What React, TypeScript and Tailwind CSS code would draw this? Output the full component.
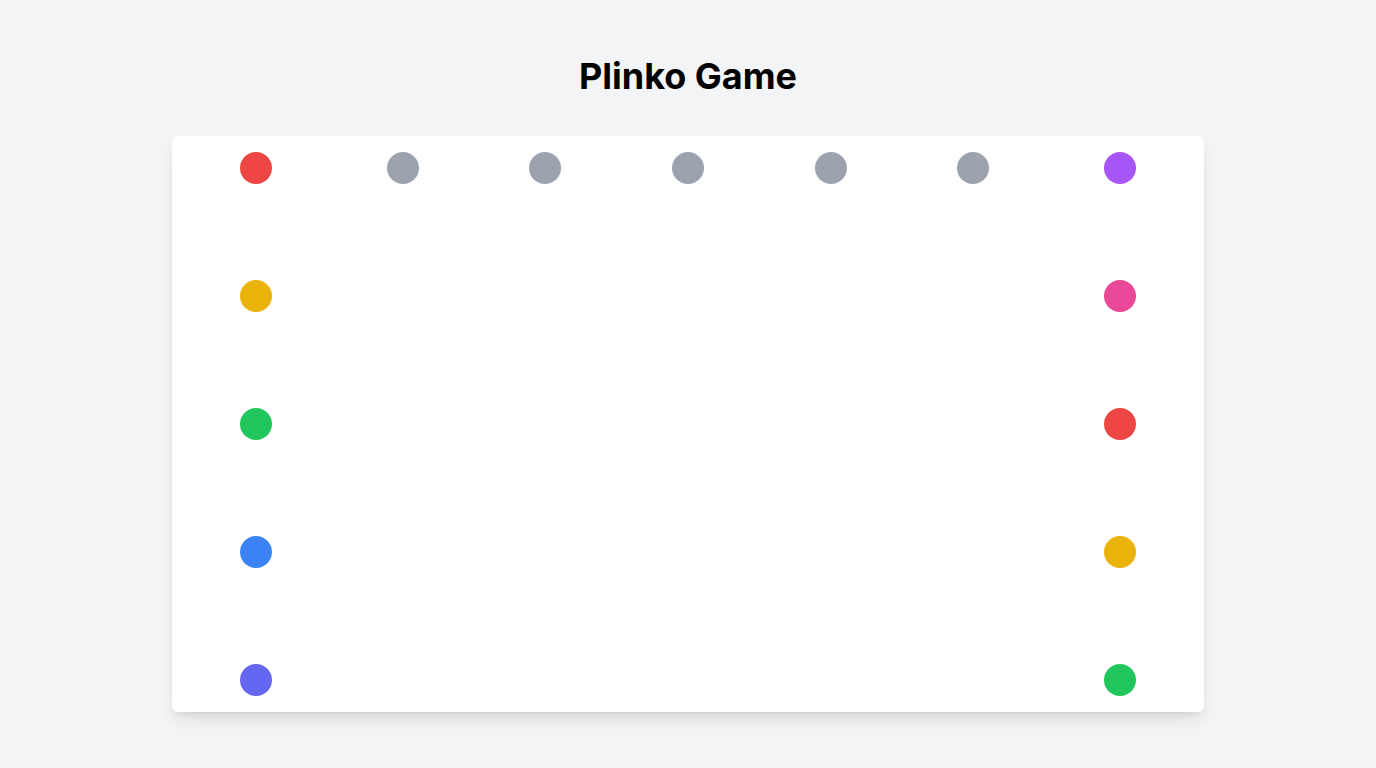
const leftPegs = ["bg-[#ef4444]", "bg-[#eab308]", "bg-[#22c55e]", "bg-[#3b82f6]", "bg-[#6366f1]"];
const rightPegs = ["bg-[#a855f7]", "bg-[#ec4899]", "bg-[#ef4444]", "bg-[#eab308]", "bg-[#22c55e]"];
const topPegs = [1, 2, 3, 4, 5];

function Peg({ color }: { color: string }) {
  return <div className={`w-8 h-8 rounded-full ${color}`} />;
}

export default function App() {
  return (
    <main className="min-h-screen bg-[#f3f4f6] flex flex-col items-center pt-14 font-['Inter',sans-serif]">
      <h1 className="text-4xl font-bold text-black mb-10">Plinko Game</h1>

      {/* Board */}
      <div className="w-[1032px] bg-white rounded-md shadow-lg flex px-[68px] py-4">
        <div className="flex flex-col gap-24">
          {leftPegs.map((c, i) => (
            <Peg key={i} color={c} />
          ))}
        </div>
        <div className="flex-1 mx-1 flex justify-evenly items-start">
          {topPegs.map((p) => (
            <Peg key={p} color="bg-[#9ca3af]" />
          ))}
        </div>
        <div className="flex flex-col gap-24">
          {rightPegs.map((c, i) => (
            <Peg key={i} color={c} />
          ))}
        </div>
      </div>
    </main>
  );
}
